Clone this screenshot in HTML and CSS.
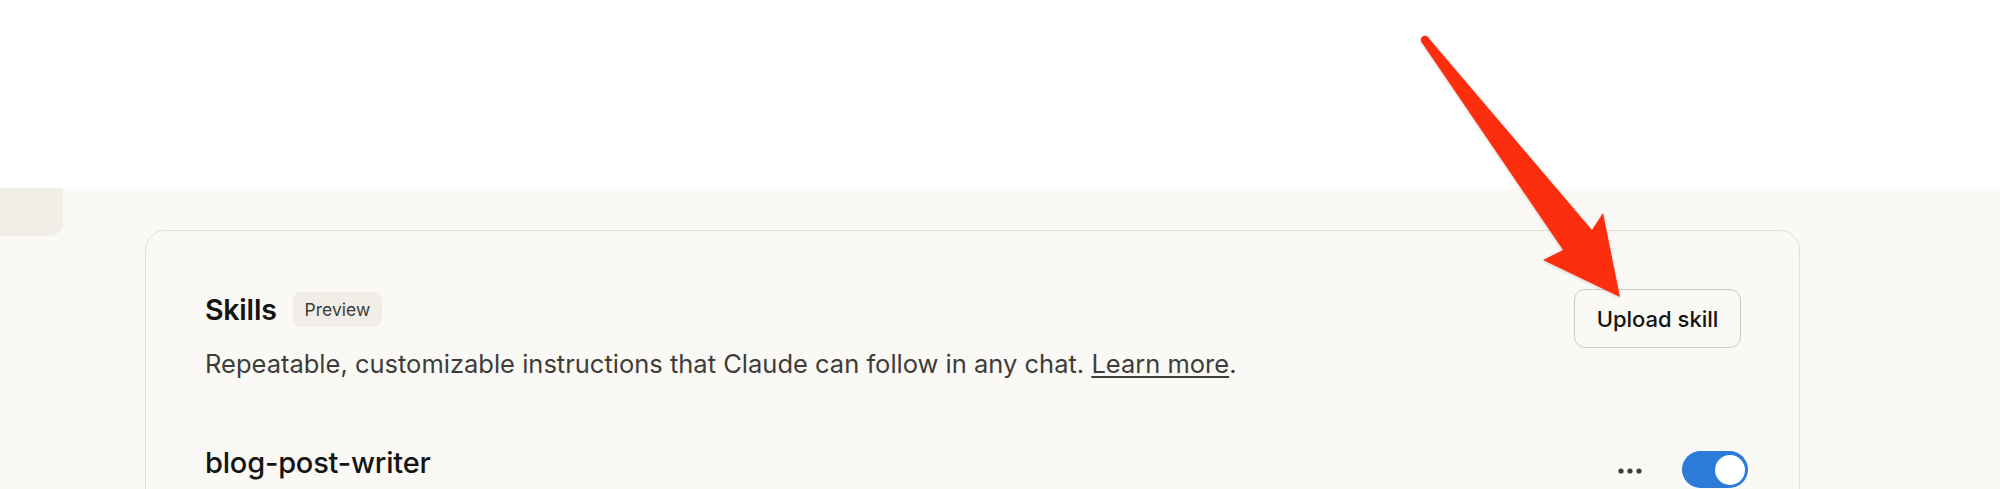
FILE: index.html
```html
<!DOCTYPE html>
<html lang="en">
<head>
<meta charset="utf-8">
<title>Skills</title>
<link rel="stylesheet" href="styles.css">
</head>
<body>
<div class="topbar"></div>
<div class="page">
  <aside class="side"><div class="tab"></div></aside>
  <main class="content">
    <section class="card">
      <div class="card-head">
        <div class="head-text">
          <div class="title-row">
            <h2 class="title">Skills</h2>
            <span class="badge">Preview</span>
          </div>
          <p class="desc">Repeatable, customizable instructions that Claude can follow in any chat. <a class="link" href="#">Learn more</a>.</p>
        </div>
        <button class="btn">Upload skill</button>
      </div>
      <ul class="skills">
        <li class="skill">
          <span class="skill-name">blog-post-writer</span>
          <div class="skill-actions">
            <button class="more" aria-label="More">
              <svg width="28" height="8" viewBox="0 0 28 8"><circle cx="4" cy="4" r="2.6" fill="#3d3d3a"/><circle cx="13" cy="4" r="2.6" fill="#3d3d3a"/><circle cx="22" cy="4" r="2.6" fill="#3d3d3a"/></svg>
            </button>
            <span class="toggle"><span class="knob"></span></span>
          </div>
        </li>
      </ul>
    </section>
  </main>
</div>
<svg class="arrow" width="2000" height="489" viewBox="0 0 2000 489">
  <defs>
    <filter id="sh" x="-20%" y="-20%" width="140%" height="140%">
      <feDropShadow dx="0" dy="1" stdDeviation="1.5" flood-color="#000" flood-opacity="0.18"/>
    </filter>
  </defs>
  <g filter="url(#sh)" fill="#fc2d0c">
    <circle cx="1425" cy="40" r="4.2"/>
    <polygon points="1421.8,42.4 1563,250 1543,260 1620,297 1603,213 1592,230 1428.2,37.6"/>
  </g>
</svg>
</body>
</html>
```
FILE: styles.css
```css
html, body {
  margin: 0;
  padding: 0;
  overflow: hidden;
  height: 489px;
}
body {
  background: #faf9f5;
  font-family: "Inter", "Liberation Sans", sans-serif;
  color: #141413;
  position: relative;
}
.topbar {
  height: 188px;
  background: #ffffff;
}
.page {
  display: flex;
}
.side {
  width: 145px;
  flex: none;
}
.tab {
  width: 63px;
  height: 48px;
  background: #f0eee6;
  border-bottom-right-radius: 14px;
}
.content {
  padding-top: 42px;
}
.card {
  width: 1655px;
  box-sizing: border-box;
  border: 1px solid #e3e0d7;
  border-radius: 20px;
  padding: 58px 58px 0 59px;
  height: 400px;
}
.card-head {
  display: flex;
  justify-content: space-between;
  align-items: flex-start;
}
.title-row {
  display: flex;
  align-items: center;
  height: 35px;
  margin-top: 3px;
  gap: 16px;
}
.title {
  margin: 0;
  font-size: 28.5px;
  font-weight: 600;
  letter-spacing: -0.2px;
}
.badge {
  display: inline-flex;
  align-items: center;
  height: 35px;
  padding: 0 12px;
  border-radius: 8px;
  background: #f0eee6;
  color: #3d3d3a;
  font-size: 17.5px;
}
.desc {
  margin: 19px 0 0;
  font-size: 25.5px;
  line-height: 36px;
  color: #3d3d3a;
}
.link {
  color: #3d3d3a;
  text-decoration: underline;
  text-underline-offset: 3px;
  text-decoration-thickness: 2px;
}
.btn {
  width: 167px;
  height: 59px;
  border: 1px solid #cdcac1;
  border-radius: 11px;
  background: #faf9f5;
  font-family: inherit;
  font-size: 22px;
  font-weight: 500;
  color: #141413;
  padding: 0;
}
.skills {
  list-style: none;
  margin: 69px -7px 0 0;
  padding: 0;
}
.skill {
  display: flex;
  justify-content: space-between;
  align-items: center;
  height: 36px;
}
.skill-name {
  align-self: flex-start;
  font-size: 29px;
  line-height: 23px;
  font-weight: 500;
  letter-spacing: -0.2px;
}
.skill-actions {
  display: flex;
  align-items: center;
  gap: 37px;
}
.more {
  border: 0;
  background: transparent;
  padding: 0;
  width: 28px;
  height: 8px;
  display: flex;
  margin-top: 3px;
}
.toggle {
  width: 66px;
  height: 37px;
  border-radius: 19px;
  background: #2c7bd8;
  display: flex;
  align-items: center;
  justify-content: flex-end;
  padding: 0 3px;
  box-sizing: border-box;
  margin-top: 1px;
}
.knob {
  width: 30px;
  height: 30px;
  border-radius: 50%;
  background: #ffffff;
}
.arrow {
  position: absolute;
  left: 0;
  top: 0;
  pointer-events: none;
}
```
